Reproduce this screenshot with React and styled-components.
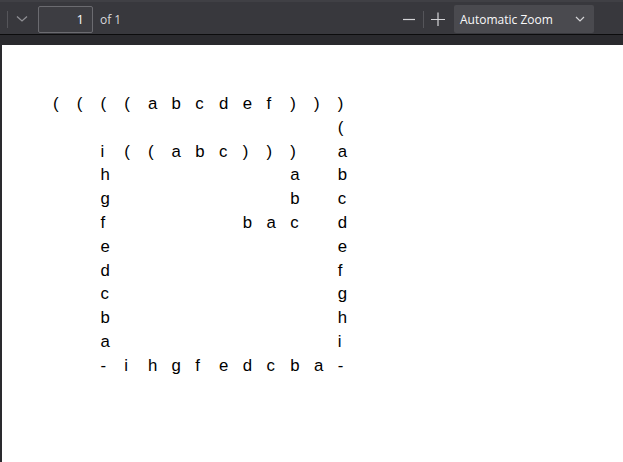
import React from 'react';
import styled, { createGlobalStyle } from 'styled-components';

const GlobalStyle = createGlobalStyle`
  html, body {
    margin: 0;
    padding: 0;
    height: 100%;
    background: #2a2a2e;
    overflow: hidden;
  }
  #root {
    height: 100%;
  }
`;

const rows = [
  '((((abcdef)))',
  '            (',
  '  i((abc))) a',
  '  h       a b',
  '  g       b c',
  '  f     bac d',
  '  e         e',
  '  d         f',
  '  c         g',
  '  b         h',
  '  a         i',
  '  -ihgfedcba-',
];

const App = () => {
  return (
    <Container>
      <GlobalStyle />
      <Toolbar>
        <Group>
          <Separator />
          <IconButton>
            <svg width="12" height="8" viewBox="0 0 12 8">
              <path d="M1 1.5 L6 6 L11 1.5" fill="none" stroke="#8f8f94" strokeWidth="1.3" />
            </svg>
          </IconButton>
          <PageInput defaultValue="1" />
          <PageCount>of 1</PageCount>
        </Group>
        <Group>
          <IconButton>
            <svg width="12" height="12" viewBox="0 0 12 12">
              <path d="M0 6.5 H12" stroke="#d4d4d7" strokeWidth="1.2" />
            </svg>
          </IconButton>
          <Separator />
          <IconButton>
            <svg width="14" height="14" viewBox="0 0 14 14">
              <path d="M0 7.5 H14 M7 0.5 V14" stroke="#d4d4d7" strokeWidth="1.2" />
            </svg>
          </IconButton>
          <ZoomSelect>
            <span>Automatic Zoom</span>
            <svg width="10" height="6" viewBox="0 0 10 6">
              <path d="M1 1 L5 5 L9 1" fill="none" stroke="#d4d4d7" strokeWidth="1.2" />
            </svg>
          </ZoomSelect>
        </Group>
      </Toolbar>
      <Viewer>
        <Page>
          <CharGrid>
            {rows.map((row, r) =>
              row.split('').map((ch, c) => (
                <Cell key={`${r}-${c}`}>{ch === ' ' ? '' : ch}</Cell>
              ))
            )}
          </CharGrid>
        </Page>
      </Viewer>
    </Container>
  );
};

const Container = styled.div`
  display: flex;
  flex-direction: column;
  height: 100%;
  font-family: "Open Sans", "Noto Sans", sans-serif;
`;

const Toolbar = styled.div`
  box-sizing: border-box;
  height: 35px;
  display: flex;
  align-items: center;
  justify-content: space-between;
  padding: 2px 29px 0 7px;
  background: #38383d;
  border-top: 2px solid #404045;
  border-bottom: 1px solid #0c0c0d;
`;

const Group = styled.div`
  display: flex;
  align-items: center;
  height: 100%;
`;

const Separator = styled.div`
  width: 1px;
  height: 17px;
  background: #55555a;
`;

const IconButton = styled.div`
  width: 28px;
  height: 26px;
  display: flex;
  align-items: center;
  justify-content: center;
`;

const PageInput = styled.input`
  box-sizing: border-box;
  width: 55px;
  height: 27px;
  margin-left: 2px;
  padding: 0 8px 0 4px;
  text-align: right;
  font: 13px "Open Sans", "Noto Sans", sans-serif;
  color: #f9f9fa;
  background: #3d3d42;
  border: 1px solid #6b6b70;
  border-radius: 2px;
  outline: none;
`;

const PageCount = styled.span`
  margin-left: 7px;
  font-size: 12px;
  color: #d7d7db;
`;

const ZoomSelect = styled.div`
  box-sizing: border-box;
  width: 140px;
  height: 28px;
  margin-left: 2px;
  padding: 0 9px 0 6px;
  display: flex;
  align-items: center;
  justify-content: space-between;
  background: #4a4a4f;
  border-radius: 2px;
  font-size: 12px;
  color: #f9f9fa;
`;

const Viewer = styled.div`
  flex: 1;
  padding: 10px 0 0 2px;
  display: flex;
`;

const Page = styled.div`
  flex: 1;
  background: #ffffff;
  padding: 47px 0 0 51px;
`;

const CharGrid = styled.div`
  display: grid;
  grid-template-columns: repeat(13, 23.72px);
  grid-auto-rows: 23.8px;
  font-family: "Liberation Sans", Arial, sans-serif;
  font-size: 16.8px;
  line-height: 23.8px;
  color: #000000;
`;

const Cell = styled.span`
  white-space: pre;
`;

export default App;
